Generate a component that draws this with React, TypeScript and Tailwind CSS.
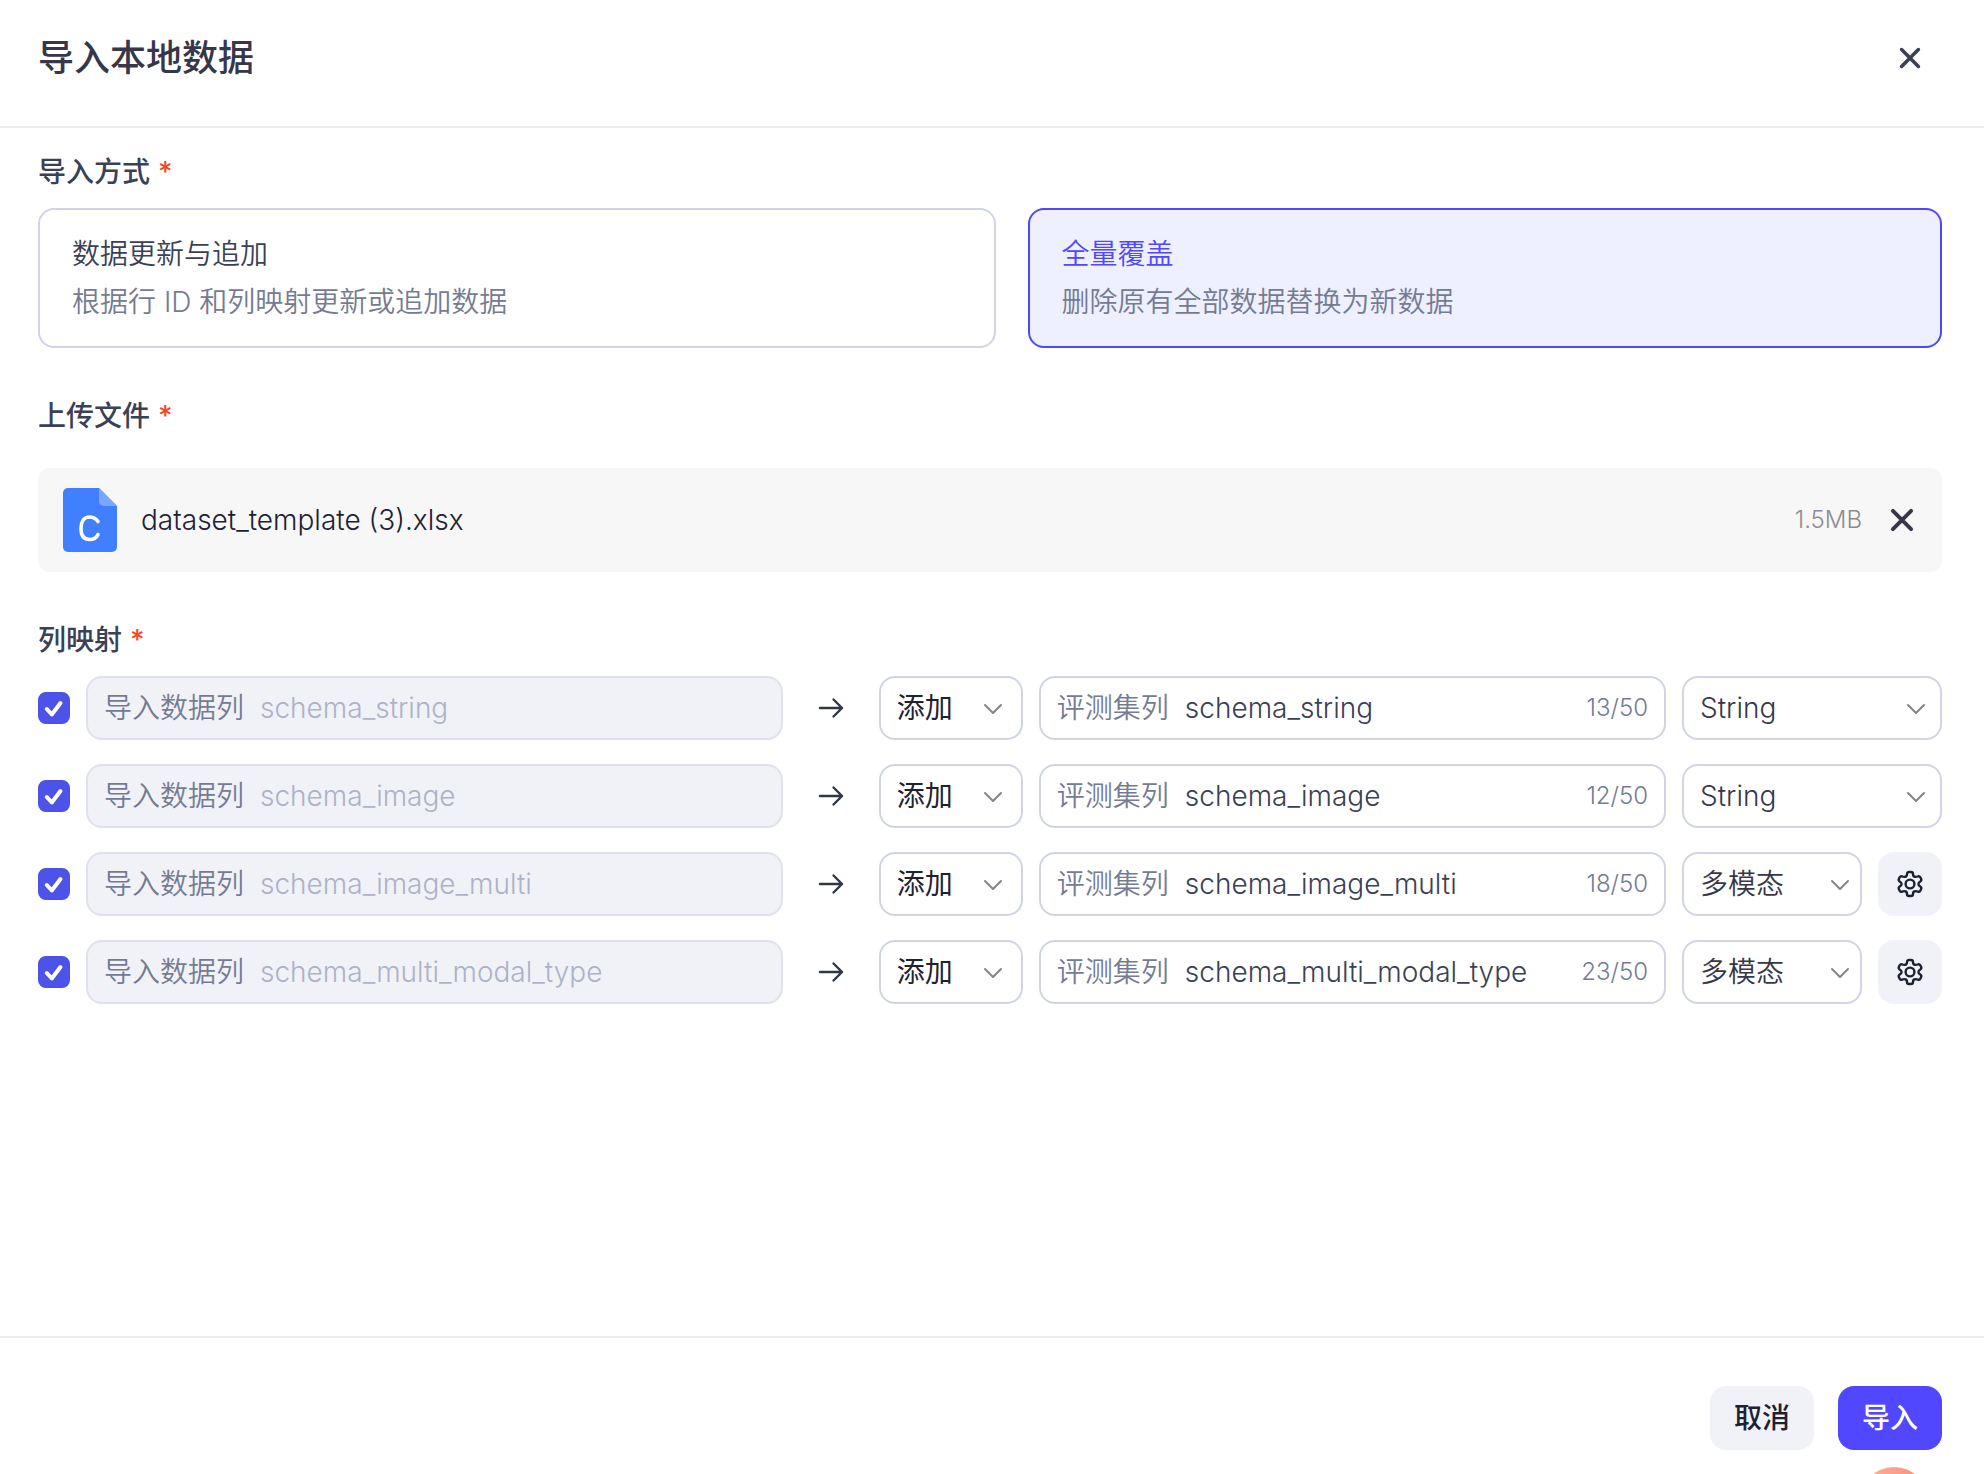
import React, { useState } from "react";

const fontStack = "font-['Inter','Noto_Sans_CJK_SC',sans-serif]";

type Mapping = { name: string; type: "String" | "多模态" };

const mappings: Mapping[] = [
  { name: "schema_string", type: "String" },
  { name: "schema_image", type: "String" },
  { name: "schema_image_multi", type: "多模态" },
  { name: "schema_multi_modal_type", type: "多模态" },
];

function CloseIcon({ className }: { className: string }) {
  return (
    <svg viewBox="0 0 24 24" className={className} fill="none" stroke="currentColor" strokeWidth="3.600" strokeLinecap="round" aria-hidden="true">
      <path d="M3.600 3.600l16.800 16.800M20.400 3.600L3.600 20.400" />
    </svg>
  );
}

function Chevron({ className }: { className: string }) {
  return (
    <svg viewBox="0 0 20 12" className={`pointer-events-none col-start-1 row-start-1 mt-0.5 h-3 w-5 self-center justify-self-end text-[#84848c] ${className}`} fill="none" stroke="currentColor" strokeWidth="2" strokeLinecap="round" strokeLinejoin="round" aria-hidden="true">
      <path d="M2 2l8 8 8-8" />
    </svg>
  );
}

function ArrowIcon() {
  return (
    <svg viewBox="0 0 26 26" className="h-[26px] w-[26px] justify-self-center text-[#303848]" fill="none" stroke="currentColor" strokeWidth="2.4" strokeLinecap="round" strokeLinejoin="round" aria-hidden="true">
      <path d="M2 13h22M15.500 4.500L24 13l-8.500 8.500" />
    </svg>
  );
}

function GearIcon() {
  return (
    <svg viewBox="0 0 28 28" className="h-7 w-7" fill="none" stroke="currentColor" strokeWidth="2.4" strokeLinejoin="round" strokeLinecap="round" aria-hidden="true">
      <path d="M11 4Q11 2 13 2H15Q17 2 17 4Q17 6.600 19 6.800Q20.500 7 21.500 6.500Q23.200 5.600 24.200 7.200L25 8.600Q25.900 10.300 24.300 11.400Q22.400 12.600 22.400 14Q22.400 15.400 24.300 16.600Q25.900 17.700 25 19.400L24.200 20.800Q23.200 22.400 21.500 21.500Q20.500 21 19 21.200Q17 21.400 17 24Q17 26 15 26H13Q11 26 11 24Q11 21.400 9 21.200Q7.500 21 6.500 21.500Q4.800 22.400 3.800 20.800L3 19.400Q2.100 17.700 3.700 16.600Q5.600 15.400 5.600 14Q5.600 12.600 3.700 11.400Q2.100 10.300 3 8.600L3.800 7.200Q4.800 5.600 6.500 6.500Q7.500 7 9 6.800Q11 6.600 11 4Z" />
      <circle cx="14" cy="14" r="4.400" />
    </svg>
  );
}

function FileIcon() {
  return (
    <svg viewBox="0 0 54 64" className="h-16 w-[54px] shrink-0" aria-hidden="true">
      <path d="M5 0H36L54 18V59a5 5 0 0 1-5 5H5a5 5 0 0 1-5-5V5a5 5 0 0 1 5-5Z" fill="#4080ff" />
      <path d="M36 0L54 18H41a5 5 0 0 1-5-5Z" fill="#7aa7ff" />
      <path d="M35 33.500C33 30.500 30 29 26.500 29C21 29 18 33.500 18 40.500C18 47.500 21 51.500 26.500 51.500C30.500 51.500 33.500 50 35 46.500" fill="none" stroke="#fff" strokeWidth="3.600" strokeLinecap="round" />
    </svg>
  );
}

function SectionLabel({ children, id }: { children: React.ReactNode; id: string }) {
  return (
    <h2 id={id} className="flex gap-2 text-[28px] leading-10 font-medium text-[#3b4154]">
      {children}
      <span className="text-[#ff441e]">*</span>
    </h2>
  );
}

function ModeCard({ title, text, selected, onSelect }: { title: string; text: string; selected: boolean; onSelect: () => void }) {
  return (
    <button
      type="button"
      role="radio"
      aria-checked={selected}
      onClick={onSelect}
      className={`flex-auto rounded-2xl border-2 px-8 py-5 text-left text-[28px] leading-[48px] ${selected ? "border-[#5147ff] bg-[#eeefff]" : "border-[#d0d4e4] bg-white"}`}
    >
      <span className={`block ${selected ? "text-[#5147ff]" : "text-[#3b4154]"}`}>{title}</span>
      <span className="block text-[#747b92]">{text}</span>
    </button>
  );
}

function MappingRow({ name, type }: Mapping) {
  const [checked, setChecked] = useState(true);
  const [target, setTarget] = useState(name);
  const multi = type === "多模态";
  return (
    <li className="grid grid-cols-[32px_10fr_64px_144px_9fr_260px] items-center gap-4">
      <span className="grid h-8 w-8">
        <input
          type="checkbox"
          aria-label={name}
          checked={checked}
          onChange={(e) => setChecked(e.target.checked)}
          className="col-start-1 row-start-1 h-8 w-8 appearance-none rounded-lg border-2 border-[#4d53e8] checked:bg-[#4d53e8]"
        />
        <svg viewBox="0 0 32 32" className="pointer-events-none col-start-1 row-start-1 h-8 w-8" fill="none" stroke="#fff" strokeWidth="4" strokeLinecap="round" strokeLinejoin="round" aria-hidden="true">
          <path d="M8.800 17l5 5.500L22.500 11" />
        </svg>
      </span>
      <label className="flex h-16 min-w-0 items-center gap-4 rounded-2xl border-2 border-[#dfe1ec] bg-[#f1f2f8] px-4">
        <span className="shrink-0 text-[#747b92]">导入数据列</span>
        <input type="text" disabled value={name} className="min-w-0 flex-1 bg-transparent font-light text-[#adb2c7]" />
      </label>
      <ArrowIcon />
      <span className="grid h-16">
        <select aria-label="操作" className="col-start-1 row-start-1 appearance-none rounded-2xl border-2 border-[#d0d4e4] bg-white pl-4 font-normal text-[#1d2233]">
          <option>添加</option>
        </select>
        <Chevron className="mr-5" />
      </span>
      <label className="flex h-16 min-w-0 items-center gap-4 rounded-2xl border-2 border-[#d0d4e4] bg-white px-4">
        <span className="shrink-0 text-[#747b92]">评测集列</span>
        <input type="text" value={target} onChange={(e) => setTarget(e.target.value)} className="min-w-0 flex-1 bg-transparent font-light text-[#3b4154] outline-none" />
        <span className="text-2xl text-[#747b92]">{target.length}/50</span>
      </label>
      <span className="flex gap-4">
        <span className="grid h-16 flex-1">
          <select aria-label="数据类型" className="col-start-1 row-start-1 appearance-none rounded-2xl border-2 border-[#d0d4e4] bg-white pl-4 text-[#38374a]">
            <option>{type}</option>
          </select>
          <Chevron className={multi ? "mr-3" : "mr-4"} />
        </span>
        {multi && (
          <button type="button" aria-label="设置" className="flex h-16 w-16 items-center justify-center rounded-2xl bg-[#f1f2f8] text-[#1d2233]">
            <GearIcon />
          </button>
        )}
      </span>
    </li>
  );
}

export default function App() {
  const [mode, setMode] = useState(1);
  return (
    <div className={`relative flex min-h-screen flex-col overflow-hidden bg-white ${fontStack}`}>
      <header className="flex items-center justify-between border-b-2 border-[#eeeeef] pt-[26px] pr-[42px] pb-9 pl-[38px]">
        <h1 className="text-4xl font-medium text-[#38374a]">导入本地数据</h1>
        <button type="button" aria-label="关闭" className="flex h-16 w-16 items-center justify-center text-[#3b4154]">
          <CloseIcon className="h-6 w-6" />
        </button>
      </header>

      <main className="flex flex-1 flex-col gap-12 pt-6 pr-[42px] pl-[38px] text-[28px] font-[350]">
        <section className="flex flex-col gap-4">
          <SectionLabel id="mode">导入方式</SectionLabel>
          <div role="radiogroup" aria-labelledby="mode" className="flex gap-8">
            <ModeCard title="数据更新与追加" text="根据行 ID 和列映射更新或追加数据" selected={mode === 0} onSelect={() => setMode(0)} />
            <ModeCard title="全量覆盖" text="删除原有全部数据替换为新数据" selected={mode === 1} onSelect={() => setMode(1)} />
          </div>
        </section>

        <section className="flex flex-col gap-8">
          <SectionLabel id="file">上传文件</SectionLabel>
          <div className="flex h-[104px] items-center rounded-xl bg-[#f7f7f7] pr-6 pl-[25px]">
            <FileIcon />
            <span className="ml-6 flex-1 text-[#1d2233]">dataset_template (3).xlsx</span>
            <span className="text-2xl text-[#8b8b92]">1.5MB</span>
            <button type="button" aria-label="移除文件" className="ml-6 flex h-8 w-8 items-center justify-center text-[#38374a]">
              <CloseIcon className="h-[26px] w-[26px]" />
            </button>
          </div>
        </section>

        <section className="flex flex-col gap-4">
          <SectionLabel id="columns">列映射</SectionLabel>
          <ul aria-labelledby="columns" className="flex flex-col gap-6">
            {mappings.map((m) => (
              <MappingRow key={m.name} {...m} />
            ))}
          </ul>
        </section>
      </main>

      <footer className="flex justify-end gap-6 border-t-2 border-[#eeeeef] pt-12 pr-[42px] pb-6 text-[28px] font-medium">
        <button type="button" className="h-16 rounded-2xl bg-[#f1f2f8] px-6 text-[#1d2233]">取消</button>
        <button type="button" className="h-16 rounded-2xl bg-[#5147ff] px-6 text-white">导入</button>
      </footer>

      <div className="absolute right-14 -bottom-[61px] h-[68px] w-[68px] rounded-full bg-linear-to-r from-[#ffb4a0] to-[#fa8a78]" />
    </div>
  );
}
